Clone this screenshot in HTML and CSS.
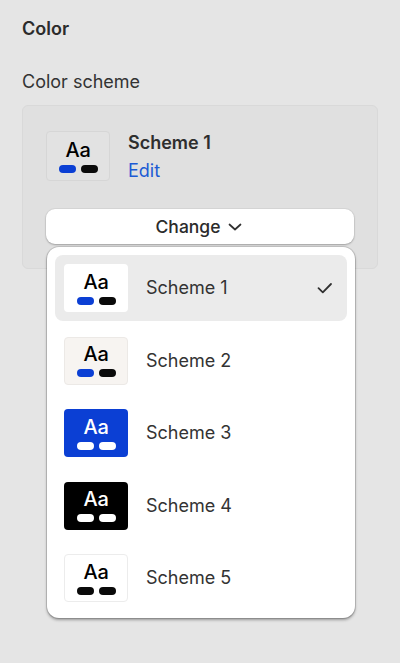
FILE: index.html
```html
<!DOCTYPE html>
<html>
<head>
<meta charset="utf-8">
<link rel="stylesheet" href="styles.css">
</head>
<body>
<div class="panel">
  <h2 class="title">Color</h2>
  <div class="label">Color scheme</div>
  <div class="card">
    <div class="current">
      <div class="swatch swatch-card">
        <span class="aa">Aa</span>
        <span class="pills"><i class="pill blue"></i><i class="pill black"></i></span>
      </div>
      <div class="current-text">
        <div class="current-name">Scheme 1</div>
        <a class="edit">Edit</a>
      </div>
    </div>
    <div class="change-wrap">
      <button class="change">Change
        <svg width="18" height="18" viewBox="0 0 18 18"><path d="M3.5 6.5 9 11.5 14.5 6.5" fill="none" stroke="#303030" stroke-width="1.7" stroke-linecap="round" stroke-linejoin="round"/></svg>
      </button>
      <div class="menu">
        <div class="item selected">
          <div class="swatch s1"><span class="aa">Aa</span><span class="pills"><i class="pill blue"></i><i class="pill black"></i></span></div>
          <span class="name">Scheme 1</span>
          <svg class="check" width="20" height="20" viewBox="0 0 20 20"><path d="M3.5 10.2 7.8 14.3 16 6" fill="none" stroke="#303030" stroke-width="1.8" stroke-linecap="round" stroke-linejoin="round"/></svg>
        </div>
        <div class="item">
          <div class="swatch s2"><span class="aa">Aa</span><span class="pills"><i class="pill blue"></i><i class="pill black"></i></span></div>
          <span class="name">Scheme 2</span>
        </div>
        <div class="item">
          <div class="swatch s3"><span class="aa">Aa</span><span class="pills"><i class="pill white"></i><i class="pill white"></i></span></div>
          <span class="name">Scheme 3</span>
        </div>
        <div class="item">
          <div class="swatch s4"><span class="aa">Aa</span><span class="pills"><i class="pill white"></i><i class="pill white"></i></span></div>
          <span class="name">Scheme 4</span>
        </div>
        <div class="item">
          <div class="swatch s5"><span class="aa">Aa</span><span class="pills"><i class="pill black"></i><i class="pill black"></i></span></div>
          <span class="name">Scheme 5</span>
        </div>
      </div>
    </div>
  </div>
</div>
</body>
</html>
```
FILE: styles.css
```css
html, body {
  margin: 0;
  padding: 0;
  background: #e5e5e5;
  font-family: Inter, "Noto Sans", sans-serif;
  color: #303030;
}
body {
  min-height: 663px;
}
.panel {
  padding: 17px 22px 0 22px;
  min-height: 646px;
}
.title {
  margin: 0;
  font-size: 18px;
  font-weight: 600;
  line-height: 24px;
  color: #2b2b2b;
}
.label {
  margin-top: 29px;
  font-size: 18px;
  line-height: 24px;
  color: #333;
}
.card {
  margin-top: 11px;
  background: #e0e0e0;
  border: 1px solid #d9d9d9;
  border-radius: 6px;
  padding: 25px 23px 24px 23px;
}
.current {
  display: flex;
  align-items: flex-start;
  gap: 18px;
}
.swatch {
  width: 64px;
  height: 48px;
  flex: none;
  box-sizing: border-box;
  border-radius: 4px;
  display: flex;
  flex-direction: column;
  align-items: center;
  justify-content: center;
  color: #000;
}
.swatch-card {
  height: 50px;
  background: #e2e2e2;
  border: 1px solid #d6d6d6;
}
.aa {
  font-size: 20px;
  font-weight: 500;
  line-height: 20px;
  letter-spacing: -0.3px;
}
.pills {
  display: flex;
  gap: 5px;
  margin-top: 5px;
}
.pill {
  display: block;
  width: 17px;
  height: 8px;
  border-radius: 4px;
}
.pill.blue { background: #0b3fd4; }
.pill.black { background: #0a0a0a; }
.pill.white { background: #fff; }
.current-text {
  padding-top: 1px;
}
.current-name {
  font-size: 18px;
  font-weight: 600;
  line-height: 22px;
  color: #2e2e2e;
}
.edit {
  display: block;
  margin-top: 6px;
  font-size: 18px;
  line-height: 22px;
  color: #1c5bd4;
}
.change-wrap {
  position: relative;
  margin-top: 27px;
}
.change {
  width: 100%;
  height: 35px;
  box-sizing: border-box;
  border: none;
  border-radius: 9px;
  background: #fff;
  box-shadow: 0 1px 2px rgba(0,0,0,0.25), 0 0 0 1px rgba(0,0,0,0.04);
  font-family: inherit;
  font-size: 17.5px;
  font-weight: 500;
  color: #2b2b2b;
  display: flex;
  align-items: center;
  justify-content: center;
  gap: 6px;
  padding: 0;
}
.change svg { margin-top: 1px; }
.menu {
  position: absolute;
  top: 38px;
  left: 1px;
  width: 308px;
  box-sizing: border-box;
  background: #fff;
  border-radius: 12px;
  padding: 8px 8px 7px 8px;
  display: flex;
  flex-direction: column;
  gap: 6.5px;
  box-shadow: 0 0 0 1px rgba(0,0,0,0.12), 0 2px 3px rgba(0,0,0,0.35);
  z-index: 2;
}
.item {
  height: 66px;
  box-sizing: border-box;
  display: flex;
  align-items: center;
  padding: 0 12px 0 9px;
  border-radius: 8px;
  gap: 18px;
}
.item.selected { background: #ebebeb; }
.name {
  flex: 1;
  font-size: 18px;
  line-height: 22px;
  color: #333;
}
.s1 { background: #fff; }
.s2 { background: #f7f4f1; border: 1px solid #ece9e6; }
.s3 { background: #0b3fd4; color: #fff; }
.s4 { background: #000; color: #fff; }
.s5 { background: #fff; border: 1px solid #ececec; }
```
